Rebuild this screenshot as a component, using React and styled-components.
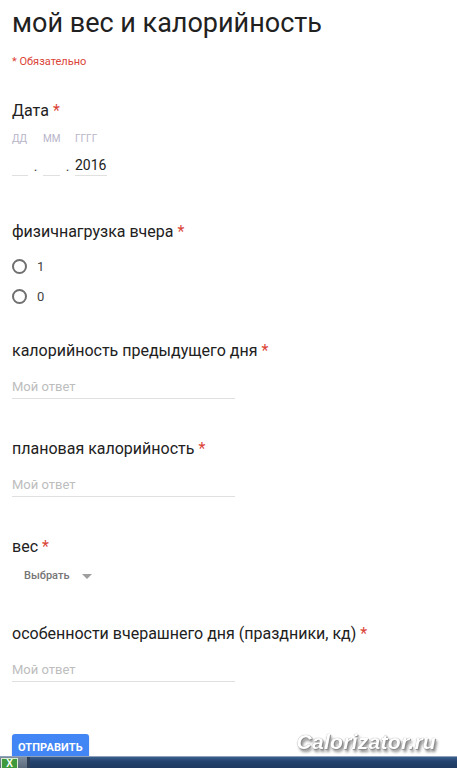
import React from "react";
import styled, { createGlobalStyle } from "styled-components";

const GlobalStyle = createGlobalStyle`
  html, body {
    margin: 0;
    padding: 0;
    background: #ffffff;
    overflow: hidden;
  }
  body {
    font-family: Roboto, "Noto Sans", Arial, sans-serif;
    color: #212121;
  }
`;

const Page = styled.div`
  padding: 7px 12px 0 12px;
  height: 768px;
  box-sizing: border-box;
`;

const Title = styled.h1`
  margin: 0;
  font-size: 27px;
  line-height: 32px;
  font-weight: 400;
  color: #212121;
`;

const RequiredNote = styled.div`
  margin-top: 15px;
  font-size: 11px;
  line-height: 16px;
  color: #db4437;
`;

const Question = styled.section`
  margin-top: ${(p) => p.$gap}px;
`;

const QuestionTitle = styled.div`
  font-size: 16px;
  line-height: 24px;
  color: #212121;
`;

const Star = styled.span`
  color: #db4437;
  margin-left: 4px;
`;

const DateLabels = styled.div`
  display: flex;
  margin-top: 9px;
  font-size: 10px;
  line-height: 14px;
  color: #b7b4c9;
`;

const DateLabel = styled.span`
  width: ${(p) => p.$w}px;
`;

const DateRow = styled.div`
  display: flex;
  align-items: flex-end;
  margin-top: 9px;
`;

const DateField = styled.div`
  width: ${(p) => p.$w}px;
  height: 20px;
  font-size: 14px;
  line-height: 20px;
  color: #212121;
  border-bottom: 1px solid #e0e0e0;
`;

const DateDot = styled.span`
  width: 15px;
  text-align: center;
  font-size: 14px;
  line-height: 20px;
  color: #424242;
`;

const Options = styled.div`
  margin-top: 7px;
`;

const RadioRow = styled.label`
  display: flex;
  align-items: center;
  height: 30px;
  gap: 10px;
  font-size: 13px;
  color: #424242;
`;

const RadioCircle = styled.span`
  width: 11px;
  height: 11px;
  border: 2px solid #707070;
  border-radius: 50%;
`;

const TextInput = styled.div`
  margin-top: 15px;
  width: 223px;
  padding-bottom: 2px;
  font-size: 13px;
  line-height: 18px;
  color: #bdbdbd;
  border-bottom: 1px solid #e0e0e0;
`;

const Select = styled.div`
  display: flex;
  align-items: center;
  gap: 13px;
  margin-top: 9px;
  padding-left: 12px;
  font-size: 11px;
  line-height: 16px;
  font-weight: 500;
  color: #757575;
`;

const Caret = styled.span`
  width: 0;
  height: 0;
  border-left: 5px solid transparent;
  border-right: 5px solid transparent;
  border-top: 5px solid #9e9e9e;
`;

const SubmitButton = styled.button`
  margin-top: 52px;
  height: 26px;
  padding: 0 6px;
  border: 0;
  border-radius: 3px;
  background: #4285f4;
  color: #ffffff;
  font-family: Roboto, Arial, sans-serif;
  font-size: 11px;
  font-weight: 700;
  letter-spacing: 0.1px;
  box-shadow: 0 1px 2px rgba(0, 0, 0, 0.2);
`;

const Watermark = styled.div`
  position: fixed;
  right: 21px;
  bottom: 14px;
  font-family: "Liberation Sans", Arial, sans-serif;
  font-size: 21px;
  font-weight: 700;
  font-style: italic;
  color: #ffffff;
  letter-spacing: 0.3px;
  text-shadow: 0 0 1px #7a7a7a, 1px 1px 1px #8a8a8a, 2px 3px 3px rgba(0, 0, 0, 0.5);
`;

const Taskbar = styled.div`
  position: fixed;
  left: 0;
  right: 0;
  bottom: 0;
  height: 11px;
  display: flex;
  background: linear-gradient(180deg, #3b5f8c 0%, #24436e 40%, #1e3a60 100%);
  border-top: 1px solid #8fa3bd;
`;

const TaskStart = styled.div`
  display: flex;
  align-items: flex-end;
  width: 27px;
  background: linear-gradient(180deg, #7d8c9c 0%, #5b6b7c 100%);
  border-right: 3px solid #2c3f57;
`;

const ExcelIcon = styled.span`
  display: flex;
  justify-content: center;
  width: 15px;
  height: 9px;
  margin-left: 1px;
  background: #3e9a3c;
  border: 1px solid #d8ecd3;
  border-bottom: 0;
  font-family: "Liberation Sans", Arial, sans-serif;
  font-size: 10px;
  line-height: 10px;
  font-weight: 700;
  color: #ffffff;
  overflow: hidden;
`;

const dateParts = [
  { label: "ДД", w: 31 },
  { label: "ММ", w: 32 },
  { label: "ГГГГ", w: 32 },
];

export default function App() {
  return (
    <>
      <GlobalStyle />
      <Page>
        <Title>мой вес и калорийность</Title>
        <RequiredNote>* Обязательно</RequiredNote>

        <Question $gap={29}>
          <QuestionTitle>
            Дата<Star>*</Star>
          </QuestionTitle>
          <DateLabels>
            {dateParts.map((d) => (
              <DateLabel key={d.label} $w={d.w}>
                {d.label}
              </DateLabel>
            ))}
          </DateLabels>
          <DateRow>
            <DateField $w={16} />
            <DateDot>.</DateDot>
            <DateField $w={17} />
            <DateDot>.</DateDot>
            <DateField $w={32}>2016</DateField>
          </DateRow>
        </Question>

        <Question $gap={44}>
          <QuestionTitle>
            физичнагрузка вчера<Star>*</Star>
          </QuestionTitle>
          <Options>
            <RadioRow>
              <RadioCircle />1
            </RadioRow>
            <RadioRow>
              <RadioCircle />0
            </RadioRow>
          </Options>
        </Question>

        <Question $gap={28}>
          <QuestionTitle>
            калорийность предыдущего дня<Star>*</Star>
          </QuestionTitle>
          <TextInput>Мой ответ</TextInput>
        </Question>

        <Question $gap={38}>
          <QuestionTitle>
            плановая калорийность<Star>*</Star>
          </QuestionTitle>
          <TextInput>Мой ответ</TextInput>
        </Question>

        <Question $gap={38}>
          <QuestionTitle>
            вес<Star>*</Star>
          </QuestionTitle>
          <Select>
            Выбрать
            <Caret />
          </Select>
        </Question>

        <Question $gap={38}>
          <QuestionTitle>
            особенности вчерашнего дня (праздники, кд)<Star>*</Star>
          </QuestionTitle>
          <TextInput>Мой ответ</TextInput>
        </Question>

        <SubmitButton>ОТПРАВИТЬ</SubmitButton>
      </Page>
      <Watermark>Calorizator.ru</Watermark>
      <Taskbar>
        <TaskStart>
          <ExcelIcon>X</ExcelIcon>
        </TaskStart>
      </Taskbar>
    </>
  );
}
